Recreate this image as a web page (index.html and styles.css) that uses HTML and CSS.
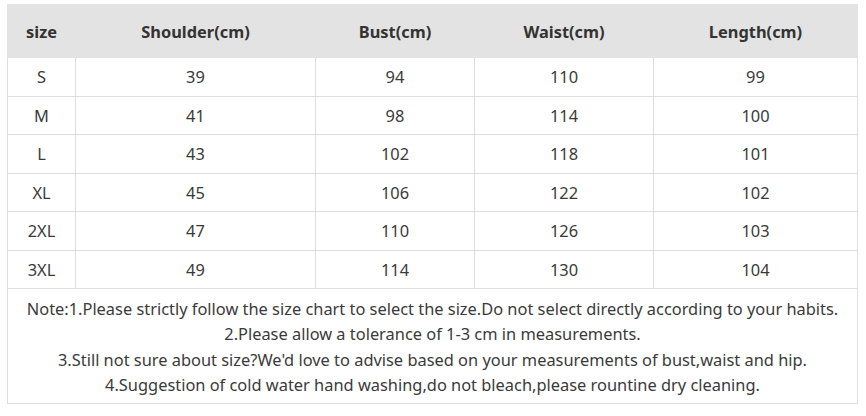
FILE: index.html
```html
<!DOCTYPE html>
<html>
<head>
<meta charset="utf-8">
<link rel="stylesheet" href="styles.css">
</head>
<body>
<div class="wrap">
<table class="chart">
<colgroup>
<col class="c1"><col class="c2"><col class="c3"><col class="c4"><col class="c5">
</colgroup>
<thead>
<tr class="head"><th>size</th><th>Shoulder(cm)</th><th>Bust(cm)</th><th>Waist(cm)</th><th>Length(cm)</th></tr>
</thead>
<tbody>
<tr><td>S</td><td>39</td><td>94</td><td>110</td><td>99</td></tr>
<tr><td>M</td><td>41</td><td>98</td><td>114</td><td>100</td></tr>
<tr><td>L</td><td>43</td><td>102</td><td>118</td><td>101</td></tr>
<tr><td>XL</td><td>45</td><td>106</td><td>122</td><td>102</td></tr>
<tr><td>2XL</td><td>47</td><td>110</td><td>126</td><td>103</td></tr>
<tr><td>3XL</td><td>49</td><td>114</td><td>130</td><td>104</td></tr>
<tr class="notes"><td colspan="5">
<div>Note:1.Please strictly follow the size chart to select the size.Do not select directly according to your habits.</div>
<div>2.Please allow a tolerance of 1-3 cm in measurements.</div>
<div>3.Still not sure about size?We'd love to advise based on your measurements of bust,waist and hip.</div>
<div>4.Suggestion of cold water hand washing,do not bleach,please rountine dry cleaning.</div>
</td></tr>
</tbody>
</table>
</div>
</body>
</html>
```
FILE: styles.css
```css
html, body {
  margin: 0;
  padding: 0;
  background: #fff;
}
.wrap {
  padding: 4px 0 0 7px;
}
.chart {
  border-collapse: collapse;
  table-layout: fixed;
  width: 850px;
  font-family: "Noto Sans", "Open Sans", sans-serif;
  color: #333;
}
.c1 { width: 68px; }
.c2 { width: 240px; }
.c3 { width: 159px; }
.c4 { width: 179px; }
.c5 { width: 204px; }
.chart th {
  background: #e3e3e3;
  height: 52px;
  padding: 0;
  font-size: 16.4px;
  font-weight: 700;
  color: #333;
  text-align: center;
  border: 1px solid #e3e3e3;
}
.chart td {
  border: 1px solid #dedede;
  height: 37.5px;
  padding: 0;
  text-align: center;
  font-size: 16.4px;
  color: #3a3a3a;
}
.notes td {
  height: auto;
  padding: 7px 0 6px;
  line-height: 25.3px;
  font-size: 16.4px;
}
```
